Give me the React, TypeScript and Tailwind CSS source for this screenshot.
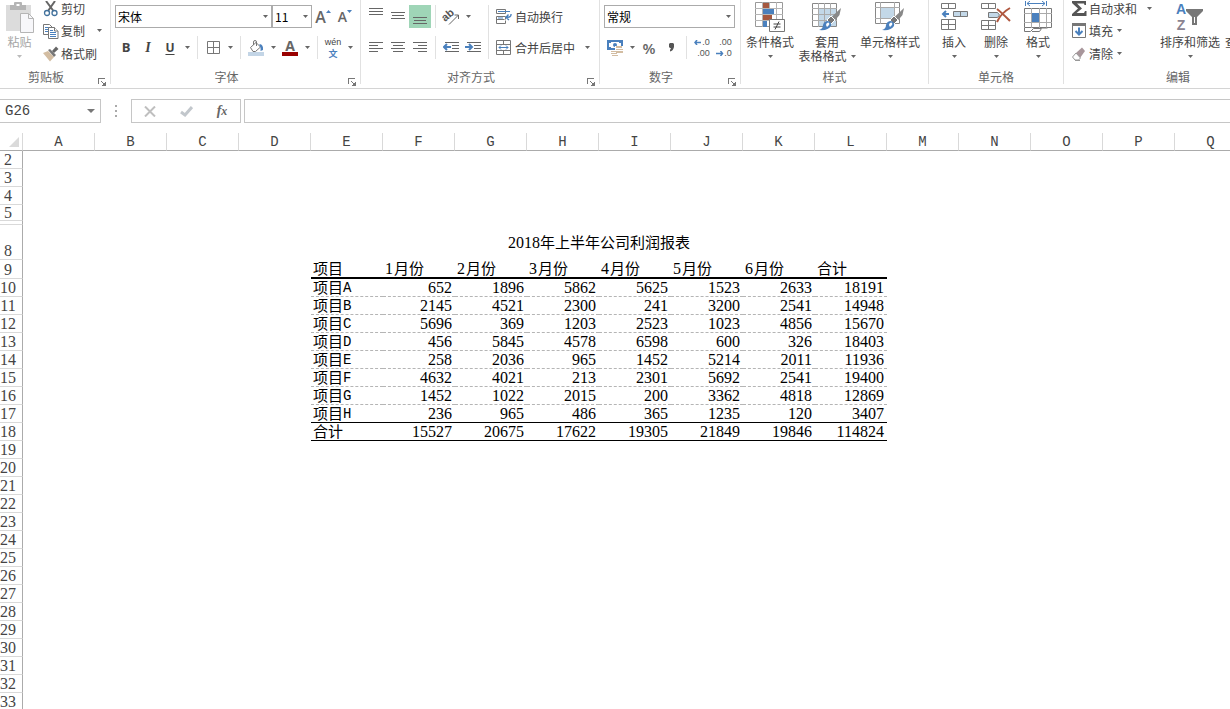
import type { ReactNode } from "react";

const COLUMNS = ["A", "B", "C", "D", "E", "F", "G", "H", "I", "J", "K", "L", "M", "N", "O", "P", "Q"];

const HEADERS = ["项目", "1月份", "2月份", "3月份", "4月份", "5月份", "6月份", "合计"];

const PROFITS = [
  { name: "A", values: [652, 1896, 5862, 5625, 1523, 2633, 18191] },
  { name: "B", values: [2145, 4521, 2300, 241, 3200, 2541, 14948] },
  { name: "C", values: [5696, 369, 1203, 2523, 1023, 4856, 15670] },
  { name: "D", values: [456, 5845, 4578, 6598, 600, 326, 18403] },
  { name: "E", values: [258, 2036, 965, 1452, 5214, 2011, 11936] },
  { name: "F", values: [4632, 4021, 213, 2301, 5692, 2541, 19400] },
  { name: "G", values: [1452, 1022, 2015, 200, 3362, 4818, 12869] },
  { name: "H", values: [236, 965, 486, 365, 1235, 120, 3407] },
];

const TOTALS = [15527, 20675, 17622, 19305, 21849, 19846, 114824];

const EMPTY_ROWS = [19, 20, 21, 22, 23, 24, 25, 26, 27, 28, 29, 30, 31, 32, 33];

/* ---------- ribbon parts ---------- */

const Caret = () => (
  <svg width="5" height="3" viewBox="0 0 5 3" className="shrink-0">
    <path d="M0 0h5L2.500 3z" fill="currentColor" />
  </svg>
);

const CaretButton = ({ label }: { label: string }) => (
  <button aria-label={label} className="flex h-[23px] w-3 shrink-0 items-center justify-center text-[#666]">
    <Caret />
  </button>
);

const Tool = ({ label, active, children }: { label: string; active?: boolean; children: ReactNode }) => (
  <button
    aria-label={label}
    className={`flex h-full w-[22px] shrink-0 items-center justify-center ${active ? "bg-[#9fd5b7]" : ""}`}
  >
    {children}
  </button>
);

const Sep = () => <div className="mx-1 w-px shrink-0 self-stretch bg-[#e1e1e1]" />;

const Row = ({ children }: { children: ReactNode }) => <div className="flex h-[23px] items-center">{children}</div>;

const Group = ({ title, launcher, children }: { title: string; launcher?: boolean; children: ReactNode }) => (
  <>
    <section className="flex h-[88px] shrink-0 flex-col">
      <div className="h-[68px]">{children}</div>
      <div className={`relative text-center leading-[18px] text-[#666] ${launcher ? "pr-[18px]" : ""}`}>
        {title}
        {launcher && (
          <button aria-label={`${title}设置`} className="absolute right-1 bottom-0">
            <svg width="8" height="8" viewBox="0 0 8 8" fill="none" stroke="#777" shapeRendering="crispEdges">
              <path d="M.5 6V.5H7M3 3l3 3M7.500 3.500v4h-4" />
              <path d="M4 7h3V4z" fill="#777" stroke="none" />
            </svg>
          </button>
        )}
      </div>
    </section>
    <div className="h-[84px] w-px shrink-0 bg-[#e1e1e1]" />
  </>
);

const Picker = ({ label, value, width }: { label: string; value: string; width: string }) => (
  <div className={`relative h-[23px] ${width}`}>
    <select
      aria-label={label}
      className="h-full w-full appearance-none border border-[#ababab] bg-white pl-[2px] text-xs text-black"
    >
      <option>{value}</option>
    </select>
    <span className="pointer-events-none absolute top-[10px] right-1 text-[#666]">
      <Caret />
    </span>
  </div>
);

const BigTool = ({
  icon,
  lines,
  width,
  muted,
}: {
  icon: ReactNode;
  lines: string[];
  width: string;
  muted?: boolean;
}) => (
  <button
    className={`flex shrink-0 flex-col items-center pt-px leading-[14px] whitespace-nowrap ${width} ${muted ? "text-[#a6a6a6]" : ""}`}
  >
    <span className="mb-[2px] flex h-8 items-center">{icon}</span>
    <span>{lines[0]}</span>
    <span className="flex h-[14px] items-center gap-1">
      {lines[1]}
      <span className={muted ? "text-[#bbb]" : "text-[#666]"}>
        <Caret />
      </span>
    </span>
  </button>
);

const SmallTool = ({ icon, text, first }: { icon: ReactNode; text: string; first?: boolean }) => (
  <button className={`flex items-center gap-[2px] ${first ? "h-[17px]" : "h-[23px]"}`}>
    <span className="flex w-4 justify-center">{icon}</span>
    {text}
  </button>
);

/* ---------- icons ---------- */

const PasteIcon = () => (
  <svg width="28" height="32" viewBox="0 0 28 32">
    <path d="M0 4h25v26H0z" fill="#dcdcdc" />
    <path d="M4 4h4V2q0-1 1-1h6q1 0 1 1v2h4v5H4z" fill="#b5b5b5" />
    <path d="M10.500 3h3v2h-3z" fill="#fff" />
    <path d="M14.500 12.500h8l5 5v14h-13z" fill="#f7f7fa" stroke="#b5b5b5" />
    <path d="M22.500 12.500v5h5" fill="none" stroke="#b5b5b5" />
  </svg>
);

const ScissorsIcon = () => (
  <svg width="16" height="16" viewBox="0 0 16 16" fill="none">
    <path d="M3 0l7.500 10M12 0L5 10" stroke="#666" strokeWidth="2" />
    <circle cx="4" cy="12" r="2.500" stroke="#41719c" strokeWidth="1.300" />
    <circle cx="11.500" cy="12" r="2.500" stroke="#41719c" strokeWidth="1.300" />
  </svg>
);

const CopyIcon = () => (
  <svg width="16" height="16" viewBox="0 0 16 16" fill="#fff" stroke="#777">
    <path d="M.5 1.500h6l3 3v7h-9z" />
    <path d="M2 4.500h4M2 6.500h3M2 8.500h3" stroke="#4a80bd" />
    <path d="M5.500 4.500h6l3.500 3.500v7.500H5.500z" />
    <path d="M11.500 4.500V8H15" />
    <path d="M7 7.500h3M7 9.500h6M7 11.500h6M7 13.500h6" stroke="#4a80bd" />
  </svg>
);

const BrushIcon = () => (
  <svg width="16" height="16" viewBox="0 0 16 16">
    <path d="M0 7l5-2 6 6-4 4.500z" fill="#d3bda2" />
    <path d="M5 4l2-1 6 6-2 2z" fill="#777" />
    <path d="M9 5l4-4.500 2.500 2.500L11 7z" fill="#666" />
  </svg>
);

const GrowIcon = ({ shrink }: { shrink?: boolean }) => (
  <span className="flex items-start">
    <span
      className={`font-['Open_Sans',sans-serif] leading-4 font-semibold text-[#666] ${shrink ? "text-sm" : "text-base"}`}
    >
      A
    </span>
    <svg width="5" height="5" viewBox="0 0 5 5">
      <path d={shrink ? "M0 1h5L2.500 4z" : "M0 4h5L2.500 1z"} fill="#4a80bd" />
    </svg>
  </span>
);

const BordersIcon = () => (
  <svg width="13" height="13" viewBox="0 0 13 13" fill="none" stroke="#777">
    <path d="M.5.5h12v12H.5zM6.500.5v12M.5 6.500h12" />
  </svg>
);

const FillColorIcon = () => (
  <svg width="16" height="16" viewBox="0 0 16 16" fill="none">
    <path d="M0 12h16v4H0z" fill="#c3d5e6" />
    <path d="M2.500 7.500l5.500-5 4.500 4.500-5 4.500H5z" fill="#fff" stroke="#777" />
    <path d="M5.500 5V2q0-1.500 1.500-1.500T8.500 2v4" stroke="#777" />
    <path d="M11.500 4q4 .5 3.500 6l-2.500 1q.5-4-1-5z" fill="#4a80bd" />
  </svg>
);

const FontColorIcon = () => (
  <span className="flex w-4 flex-col items-center">
    <span className="font-['Open_Sans',sans-serif] text-sm leading-3 font-bold text-[#666]">A</span>
    <span className="h-1 w-4 bg-[#990000]" />
  </span>
);

const LINES: Record<string, string> = {
  top: "M0 .5h14M0 3.500h14M0 6.500h14",
  middle: "M0 4.500h14M1 7.500h12M0 10.500h14",
  bottom: "M0 9.500h14M1 12.500h12M0 15.500h14",
  left: "M0 3.500h14M0 6.500h9M0 9.500h14M0 12.500h9",
  center: "M0 3.500h14M2 6.500h10M0 9.500h14M2 12.500h10",
  right: "M0 3.500h14M5 6.500h9M0 9.500h14M5 12.500h9",
};

const LinesIcon = ({ kind }: { kind: string }) => (
  <svg width="14" height="17" viewBox="0 0 14 17" stroke="#666">
    <path d={LINES[kind]} />
  </svg>
);

const OrientationIcon = () => (
  <svg width="18" height="20" viewBox="0 0 18 20" fill="none" stroke="#666">
    <text
      x="2"
      y="14"
      transform="rotate(-40 4 13)"
      fill="#555"
      stroke="none"
      fontSize="11"
      className="font-['Liberation_Sans',sans-serif] font-bold"
    >
      ab
    </text>
    <path d="M7 17.500L16.500 8M16.500 12V8h-4" />
  </svg>
);

const IndentIcon = ({ out }: { out?: boolean }) => (
  <svg width="16" height="13" viewBox="0 0 16 13" fill="none" stroke="#666">
    <path d="M2 1.500h14M9 4.500h7M9 7.500h7M2 10.500h14" />
    <path d={out ? "M8 6H1.500M4 3L1 6l3 3" : "M0 6h6.500M4 3l3 3-3 3"} stroke="#4a80bd" strokeWidth="2" />
  </svg>
);

const WrapIcon = () => (
  <svg width="16" height="16" viewBox="0 0 16 16" fill="none" stroke="#777">
    <path d="M.5.5h9v4h-9zM.5 7.500h9v3M.5 7.500v7h9v-3M.5 10.500h8" />
    <path d="M2 2.500h12M2 9h5" stroke="#4a80bd" />
    <path d="M15 5q.5 3.500-5 3.500M12.500 5.500l-2.500 3 3 2.500" stroke="#4a80bd" strokeWidth="1.400" />
  </svg>
);

const MergeIcon = () => (
  <svg width="15" height="15" viewBox="0 0 15 15" fill="none" stroke="#777">
    <path d="M.5.5h14v14H.5zM.5 4.500h14M.5 10.500h14M7.500.5v4M7.500 10.500v4" />
    <path d="M3 7.500h9M5 5.500l-2 2 2 2M10 5.500l2 2-2 2" stroke="#4a80bd" />
  </svg>
);

const CurrencyIcon = () => (
  <svg width="16" height="16" viewBox="0 0 16 16">
    <path d="M1 1h14v8H1z" fill="#fff" stroke="#4a80bd" strokeWidth="2" />
    <circle cx="8" cy="5" r="2" fill="#4a80bd" />
    <path d="M2 2h2v1H2zM12 2h2v1h-2zM2 7h2v1H2z" fill="#4a80bd" />
    <path d="M8 6h8v7h-4v3H4v-6h4z" fill="#fff" />
    <g fill="#d3bda2">
      <path d="M9 6h6v2H9zM9 9h7v1H9zM9 11h7v2H9zM4 11h5v1H4zM4 13h6v1H4zM5 15h6v1H5z" />
    </g>
  </svg>
);

const DecimalIcon = ({ more }: { more?: boolean }) => (
  <span className="flex flex-col font-['Liberation_Sans',sans-serif] text-[9px] leading-[11px] text-[#555]">
    <span className="flex items-center justify-end">
      {more && (
        <svg width="8" height="5" viewBox="0 0 8 5" fill="none" stroke="#4a80bd" strokeWidth="1.500">
          <path d="M7 2.500H1M3 0L1 2.500 3 5" />
        </svg>
      )}
      {more ? ".0" : ".00"}
    </span>
    <span className="flex items-center justify-end">
      {!more && (
        <svg width="8" height="5" viewBox="0 0 8 5" fill="none" stroke="#4a80bd" strokeWidth="1.500">
          <path d="M0 2.500h6M4.500 0l2 2.500-2 2.500" />
        </svg>
      )}
      {more ? ".00" : ".0"}
    </span>
  </span>
);

const ConditionalIcon = () => (
  <svg width="30" height="30" viewBox="0 0 30 30">
    <path d="M.5.5h27v24H.5z" fill="#fff" stroke="#999" />
    <path d="M0 6.500h28M0 12.500h28M0 18.500h28M7.500 0v25M14.500 0v25M21.500 0v25" stroke="#b5b5b5" />
    <path d="M8 1h6v5H8z" fill="#a5583f" />
    <path d="M8 7h11v5H8z" fill="#4a80bd" />
    <path d="M8 13h9v5H8z" fill="#a5583f" />
    <path d="M8 19h4v6H8z" fill="#4a80bd" />
    <path d="M14.500 17.500h15v12h-15z" fill="#fff" stroke="#777" />
    <path d="M18.500 22h7M18.500 25h7M24 19.500l-4 8" stroke="#444" />
  </svg>
);

const PaintTip = () => (
  <>
    <path d="M29 6l-1.500 7-5 6-4-3z" fill="#888" />
    <path d="M19 14l4 4-4 4-4-4z" fill="#777" stroke="#fff" />
    <path d="M7 28q4-1 4-5 1-4 5-4 4 1 3 5-3 5-12 4z" fill="#4a80bd" />
    <path d="M14 23q0-2 2-2.500 2 .5 1 2.500l-2 2z" fill="#fff" />
  </>
);

const TableStyleIcon = () => (
  <svg width="30" height="30" viewBox="0 0 30 30">
    <path d="M.5 1.500h24v23H.5z" fill="#fff" stroke="#888" />
    <path d="M7 7h17v17H7z" fill="#c3d8e8" />
    <path d="M0 6.500h25M0 12.500h25M0 18.500h25M6.500 1v24M12.500 1v24M18.500 1v24" stroke="#aaa" />
    <PaintTip />
  </svg>
);

const CellStyleIcon = () => (
  <svg width="30" height="30" viewBox="0 0 30 30">
    <path d="M.5.5h24v21H.5z" fill="#fff" stroke="#888" />
    <path d="M0 5.500h25M0 16.500h25M5.500 0v22M19.500 0v22" stroke="#aaa" />
    <path d="M6 6h13v10H6z" fill="#c3d8e8" />
    <PaintTip />
  </svg>
);

const InsertIcon = () => (
  <svg width="27" height="28" viewBox="0 0 27 28" fill="none" stroke="#777">
    <path d="M.5.5h14v5H.5zM7.500.5v5M.5 16.500h14v10H.5zM7.500 16.500v10M.5 21.500h14" />
    <path d="M12.500 8.500h14v5h-14z" fill="#c3d8e8" />
    <path d="M19.500 8.500v5" />
    <path d="M8 11H2.500M5 8l-3 3 3 3" stroke="#4a80bd" strokeWidth="2" />
  </svg>
);

const DeleteIcon = () => (
  <svg width="30" height="28" viewBox="0 0 30 28" fill="none" stroke="#777">
    <path d="M.5.5h14v5H.5zM7.500.5v5M.5 17.500h14v9H.5zM7.500 17.500v9M.5 22.500h14" />
    <path d="M7.500 9.500h9l2 2.500-2 2.500h-9z" fill="#c3d8e8" />
    <path d="M16 6q5 4 13 12M29 5Q20 10 16 19" stroke="#b0583f" strokeWidth="2" />
  </svg>
);

const FormatIcon = () => (
  <svg width="28" height="32" viewBox="0 0 28 32" fill="none" stroke="#777">
    <path d="M1.500 0v5M22.500 0v5M3 2.500h18M6 0L3 2.500 6 5M18 0l3 2.500L18 5" stroke="#4a80bd" />
    <path d="M.5 7.500h27v19H.5z" />
    <path d="M0 12.500h28M0 21.500h28M7.500 7v20M15.500 7v20M22.500 7v20" stroke="#aaa" />
    <path d="M8 12h7v9H8z" fill="#4a80bd" stroke="none" />
    <path d="M.5 27v3.500h6l3-3h8l-2 3H8M17.500 27h6" />
  </svg>
);

const SumIcon = () => (
  <svg width="15" height="15" viewBox="0 0 15 15">
    <path d="M0 0h14v4h-1.500l-.5-1.500H5L10 7.500 4.500 12H12l1-2h1.500v5H0v-2l6-5.500L0 2z" fill="#555" />
  </svg>
);

const FillIcon = () => (
  <svg width="14" height="15" viewBox="0 0 14 15" fill="none">
    <path d="M.5.5h13v14H.5z" stroke="#777" />
    <path d="M0 0h14v3H0z" fill="#777" />
    <path d="M7 4.500v7M3.500 8L7 11.500 10.500 8" stroke="#4a80bd" strokeWidth="2" />
  </svg>
);

const EraserIcon = () => (
  <svg width="14" height="14" viewBox="0 0 14 14">
    <path d="M4 6l6-5.500L13 4l-5 7z" fill="#a8969b" />
    <path d="M4 6l4.500 5-2 2H3L.5 10z" fill="#fff" stroke="#999" />
    <path d="M3 13.500h5" stroke="#999" />
  </svg>
);

const SortIcon = () => (
  <span className="flex">
    <span className="flex flex-col items-center font-['Liberation_Sans',sans-serif] text-sm leading-4 font-bold">
      <span className="text-[#4a80bd]">A</span>
      <span className="text-[#8a8390]">Z</span>
    </span>
    <svg width="18" height="16" viewBox="0 0 18 16" className="mt-2">
      <path d="M0 0h17v2l-6 6v8H6V8L0 2z" fill="#777" />
      <path d="M8 8h1v6H8z" fill="#fff" />
    </svg>
  </span>
);

const FindIcon = () => (
  <svg width="28" height="28" viewBox="0 0 28 28" fill="#777">
    <path d="M3 8h8v14H3zM17 8h8v14h-8zM11 12h6v4h-6z" />
  </svg>
);

const Ribbon = () => (
  <div className="flex overflow-hidden border-b border-[#d4d4d4] text-xs whitespace-nowrap text-[#444]">
    <Group title="剪贴板" launcher>
      <div className="flex w-[110px] items-start gap-1">
        <BigTool icon={<PasteIcon />} lines={["粘贴"]} width="w-[39px]" muted />
        <div className="flex flex-col">
          <div className="mb-[2px] flex h-[17px]">
            <SmallTool icon={<ScissorsIcon />} text="剪切" first />
          </div>
          <div className="flex gap-2">
            <SmallTool icon={<CopyIcon />} text="复制" />
            <CaretButton label="复制选项" />
          </div>
          <SmallTool icon={<BrushIcon />} text="格式刷" />
        </div>
      </div>
    </Group>

    <Group title="字体" launcher>
      <div className="flex w-[249px] flex-col gap-2 pt-[5px] pl-1">
        <Row>
          <Picker label="字体名称" value="宋体" width="w-[157px]" />
          <Picker label="字号" value="11" width="w-10" />
          <Tool label="增大字号">
            <GrowIcon />
          </Tool>
          <Tool label="减小字号">
            <GrowIcon shrink />
          </Tool>
        </Row>
        <Row>
          <Tool label="加粗">
            <b className="font-['Open_Sans',sans-serif] text-[13px]">B</b>
          </Tool>
          <Tool label="倾斜">
            <i className="font-['Liberation_Serif',serif] text-sm font-bold">I</i>
          </Tool>
          <Tool label="下划线">
            <u className="font-['Open_Sans',sans-serif] text-xs font-bold underline-offset-2">U</u>
          </Tool>
          <CaretButton label="下划线选项" />
          <Sep />
          <Tool label="边框">
            <BordersIcon />
          </Tool>
          <CaretButton label="边框选项" />
          <Sep />
          <Tool label="填充颜色">
            <FillColorIcon />
          </Tool>
          <CaretButton label="填充颜色选项" />
          <Tool label="字体颜色">
            <FontColorIcon />
          </Tool>
          <CaretButton label="字体颜色选项" />
          <Sep />
          <Tool label="拼音">
            <span className="flex flex-col items-center text-[9px] leading-[11px]">
              <span className="font-['Liberation_Sans',sans-serif]">wén</span>
              <span className="font-bold text-[#4a80bd]">文</span>
            </span>
          </Tool>
          <CaretButton label="拼音选项" />
        </Row>
      </div>
    </Group>

    <Group title="对齐方式" launcher>
      <div className="flex w-[238px] pt-[5px] pl-1">
        <div className="flex w-[119px] flex-col gap-2">
          <Row>
            <Tool label="顶端对齐">
              <LinesIcon kind="top" />
            </Tool>
            <Tool label="垂直居中">
              <LinesIcon kind="middle" />
            </Tool>
            <Tool label="底端对齐" active>
              <LinesIcon kind="bottom" />
            </Tool>
            <Sep />
            <Tool label="方向">
              <OrientationIcon />
            </Tool>
            <CaretButton label="方向选项" />
          </Row>
          <Row>
            <Tool label="左对齐">
              <LinesIcon kind="left" />
            </Tool>
            <Tool label="居中">
              <LinesIcon kind="center" />
            </Tool>
            <Tool label="右对齐">
              <LinesIcon kind="right" />
            </Tool>
            <Sep />
            <Tool label="减少缩进量">
              <IndentIcon out />
            </Tool>
            <Tool label="增加缩进量">
              <IndentIcon />
            </Tool>
          </Row>
        </div>
        <Sep />
        <div className="flex flex-col gap-2 pl-[3px]">
          <Row>
            <button className="flex items-center gap-[3px]">
              <WrapIcon />
              自动换行
            </button>
          </Row>
          <Row>
            <button className="flex items-center gap-1">
              <MergeIcon />
              合并后居中
            </button>
            <span className="ml-1.5 h-full">
              <CaretButton label="合并选项" />
            </span>
          </Row>
        </div>
      </div>
    </Group>

    <Group title="数字" launcher>
      <div className="flex w-[140px] flex-col gap-2 pt-[5px] pl-1">
        <Picker label="数字格式" value="常规" width="w-[131px]" />
        <Row>
          <Tool label="会计数字格式">
            <CurrencyIcon />
          </Tool>
          <CaretButton label="会计格式选项" />
          <Tool label="百分比样式">
            <span className="font-['Open_Sans',sans-serif] text-[15px] font-semibold text-[#666]">%</span>
          </Tool>
          <Tool label="千位分隔样式">
            <svg width="5" height="9" viewBox="0 0 5 9">
              <path d="M0 1l1-1h3l1 1v3q-1 4-4 4.500V7l1-2H1L0 4z" fill="#555" />
            </svg>
          </Tool>
          <Sep />
          <Tool label="增加小数位数">
            <DecimalIcon more />
          </Tool>
          <Tool label="减少小数位数">
            <DecimalIcon />
          </Tool>
        </Row>
      </div>
    </Group>

    <Group title="样式">
      <div className="flex w-[187px] items-start pl-[3px]">
        <BigTool icon={<ConditionalIcon />} lines={["条件格式"]} width="w-[52px]" />
        <BigTool icon={<TableStyleIcon />} lines={["套用", "表格格式"]} width="w-[62px]" />
        <BigTool icon={<CellStyleIcon />} lines={["单元格样式"]} width="w-16" />
      </div>
    </Group>

    <Group title="单元格">
      <div className="flex w-[134px] items-start pl-1">
        <BigTool icon={<InsertIcon />} lines={["插入"]} width="w-[42px]" />
        <BigTool icon={<DeleteIcon />} lines={["删除"]} width="w-[42px]" />
        <BigTool icon={<FormatIcon />} lines={["格式"]} width="w-[42px]" />
      </div>
    </Group>

    <Group title="编辑">
      <div className="flex w-[228px] items-start pl-[7px]">
        <div className="flex w-[85px] flex-col">
          <div className="mb-[2px] flex h-[17px] items-center gap-1.5">
            <SmallTool icon={<SumIcon />} text="自动求和" first />
            <CaretButton label="求和选项" />
          </div>
          <div className="flex">
            <SmallTool icon={<FillIcon />} text="填充" />
            <CaretButton label="填充选项" />
          </div>
          <div className="flex">
            <SmallTool icon={<EraserIcon />} text="清除" />
            <CaretButton label="清除选项" />
          </div>
        </div>
        <BigTool icon={<SortIcon />} lines={["排序和筛选"]} width="w-[68px]" />
        <BigTool icon={<FindIcon />} lines={["查找和选择"]} width="w-[62px]" />
      </div>
    </Group>
  </div>
);

const FormulaBar = () => (
  <div className="flex h-11 items-center">
    <div className="relative h-6 w-[101px] shrink-0">
      <input
        aria-label="名称框"
        defaultValue="G26"
        className="block h-full w-full border border-l-0 border-[#c6c6c6] pl-[5px] font-['Liberation_Mono',monospace] text-sm text-[#444] outline-none"
      />
      <svg width="8" height="4" viewBox="0 0 8 4" className="pointer-events-none absolute top-[10px] right-1.5">
        <path d="M0 0h8L4 4z" fill="#777" />
      </svg>
    </div>
    <div className="flex w-[30px] shrink-0 flex-col items-center gap-[3px]">
      <span className="size-[2px] bg-[#aaa]" />
      <span className="size-[2px] bg-[#aaa]" />
      <span className="size-[2px] bg-[#aaa]" />
    </div>
    <div className="mr-[3px] flex h-6 w-[110px] shrink-0 border border-[#c6c6c6]">
      <button aria-label="取消" className="flex w-9 items-center justify-center">
        <svg width="12" height="11" viewBox="0 0 12 11" stroke="#bfbfbf" strokeWidth="2">
          <path d="M1 .5l10 10M11 .5l-10 10" />
        </svg>
      </button>
      <button aria-label="输入" className="flex w-9 items-center justify-center">
        <svg width="13" height="11" viewBox="0 0 13 11" fill="none" stroke="#c2c7cc" strokeWidth="3">
          <path d="M1 6l4 3 7-8" />
        </svg>
      </button>
      <button
        aria-label="插入函数"
        className="w-9 font-['Liberation_Serif',serif] text-sm leading-[22px] font-bold text-[#666] italic"
      >
        f<span className="text-xs">x</span>
      </button>
    </div>
    <input aria-label="编辑栏" className="h-6 min-w-0 flex-1 border border-r-0 border-[#c6c6c6] px-1 outline-none" />
  </div>
);

/* ---------- sheet ---------- */

const RowHead = ({ n }: { n?: number }) => (
  <th
    className={`border-r border-b border-r-[#ababab] border-b-[#d9d9d9] pr-1.5 align-bottom font-normal text-[#444] ${n ? "pt-px" : ""}`}
  >
    <span className="flex justify-center">{n}</span>
  </th>
);

const Month = ({ text }: { text: string }) => {
  const digit = text.match(/^\d/)?.[0];
  return digit ? (
    <>
      <span className="mr-px text-base leading-4">{digit}</span>
      {text.slice(1)}
    </>
  ) : (
    <>{text}</>
  );
};

const BlankRow = ({ n, height = "h-[18px]" }: { n?: number; height?: string }) => (
  <tr className={height}>
    <RowHead n={n} />
    <td colSpan={17} />
  </tr>
);

const Sheet = () => (
  <div className="overflow-hidden">
    <table className="w-[1247px] table-fixed border-separate border-spacing-0 font-['Liberation_Serif','Noto_Sans_CJK_SC',serif] text-base leading-4 text-black">
      <colgroup>
        <col className="w-[23px]" />
        {COLUMNS.map((c) => (
          <col key={c} className="w-[72px]" />
        ))}
      </colgroup>
      <thead>
        <tr className="h-[18px]">
          <th aria-label="全选" className="border-r border-b border-r-[#d9d9d9] border-b-[#ababab]">
            <svg width="10" height="10" viewBox="0 0 10 10" className="mr-[3px] ml-auto">
              <path d="M10 0v10H0z" fill="#dadada" />
            </svg>
          </th>
          {COLUMNS.map((c) => (
            <th
              key={c}
              className="border-r border-b border-r-[#d9d9d9] border-b-[#ababab] pt-px font-['Liberation_Mono',monospace] text-sm leading-4 font-normal text-[#444]"
            >
              {c}
            </th>
          ))}
        </tr>
      </thead>
      <tbody>
        <BlankRow n={2} />
        <BlankRow n={3} />
        <BlankRow n={4} />
        <tr className="h-4">
          <th className="border-r border-b border-r-[#ababab] border-b-[#d9d9d9] pr-1.5 leading-[15px] font-normal text-[#444]">
            5
          </th>
          <td colSpan={17} />
        </tr>
        <BlankRow height="h-1" />
        <tr className="h-[35px]">
          <RowHead n={8} />
          <td colSpan={4} />
          <td colSpan={8} className="text-center text-[15px]">
            <span className="text-base">2018</span>年上半年公司利润报表
          </td>
          <td colSpan={5} />
        </tr>
        <tr className="h-[19px]">
          <RowHead n={9} />
          <td colSpan={4} />
          {HEADERS.map((h) => (
            <td key={h} className="border-b-2 border-black pl-[2px] text-[15px]">
              <Month text={h} />
            </td>
          ))}
          <td colSpan={5} />
        </tr>
        {PROFITS.map((p, i) => {
          const line = i === PROFITS.length - 1 ? "border-b border-black" : "border-b border-dashed border-[#b5b5b5]";
          return (
            <tr key={p.name} className="h-[18px]">
              <RowHead n={10 + i} />
              <td colSpan={4} />
              <td className={`pl-[2px] text-[15px] ${line}`}>
                <span className="flex h-4 items-center">
                  项目<span className="font-['Liberation_Mono',monospace] text-sm leading-4">{p.name}</span>
                </span>
              </td>
              {p.values.map((v, j) => (
                <td key={j} className={`pt-px pr-[3px] text-right ${line}`}>
                  {v}
                </td>
              ))}
              <td colSpan={5} />
            </tr>
          );
        })}
        <tr className="h-[18px]">
          <RowHead n={18} />
          <td colSpan={4} />
          <td className="border-b border-black pl-[2px] text-[15px]">合计</td>
          {TOTALS.map((v) => (
            <td key={v} className="border-b border-black pt-px pr-[3px] text-right">
              {v}
            </td>
          ))}
          <td colSpan={5} />
        </tr>
        {EMPTY_ROWS.map((n) => (
          <BlankRow key={n} n={n} />
        ))}
      </tbody>
    </table>
  </div>
);

const App = () => (
  <div className="h-screen overflow-hidden bg-white font-['Noto_Sans_CJK_SC',sans-serif]">
    <Ribbon />
    <FormulaBar />
    <Sheet />
  </div>
);

export default App;
